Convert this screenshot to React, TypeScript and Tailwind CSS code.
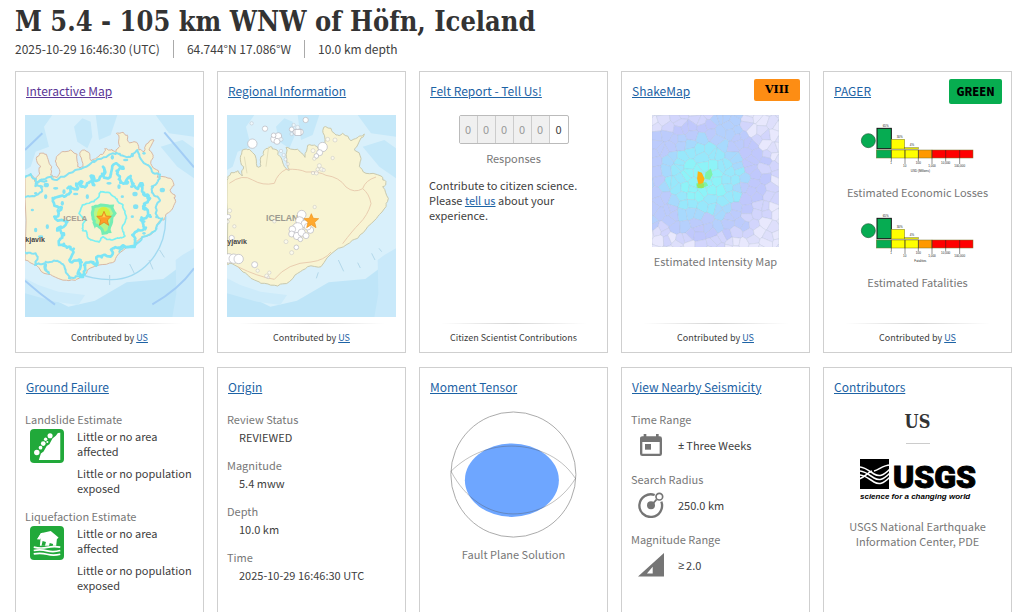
import type { ReactNode } from "react";

type Point = [number, number];

function createRandom(seed: number) {
  let state = seed;
  return () => {
    state = (state * 16807) % 2147483647;
    return state / 2147483647;
  };
}

function parsePoints(source: string): Point[] {
  return source.split(" ").map((pair) => {
    const [x, y] = pair.split(",").map(Number);
    return [x, y];
  });
}

/** Adds natural looking irregularity to an outline by displacing midpoints. */
function roughen(source: string, amount: number, depth: number, closed = true) {
  const random = createRandom(4231);
  let points = parsePoints(source);
  let scale = amount;
  for (let level = 0; level < depth; level += 1) {
    const next: Point[] = [];
    points.forEach(([x, y], i) => {
      next.push([x, y]);
      if (!closed && i === points.length - 1) return;
      const [nx, ny] = points[(i + 1) % points.length];
      next.push([
        (x + nx) / 2 + (random() - 0.5) * scale,
        (y + ny) / 2 + (random() - 0.5) * scale,
      ]);
    });
    points = next;
    scale *= 0.55;
  }
  return points.map(([x, y]) => `${x.toFixed(1)},${y.toFixed(1)}`).join(" ");
}

/** Voronoi cells for jittered grid seeds, cut from a bounding box. */
function voronoi(width: number, height: number, columns: number, rows: number) {
  const random = createRandom(9173);
  const seeds: Point[] = [];
  for (let r = -1; r <= rows; r += 1) {
    for (let c = -1; c <= columns; c += 1) {
      seeds.push([
        ((c + 0.5 + (random() - 0.5) * 0.95) * width) / columns,
        ((r + 0.5 + (random() - 0.5) * 0.95) * height) / rows,
      ]);
    }
  }
  const reach = (width / columns) * 4;
  return seeds.map((seed) => {
    let cell: Point[] = [[0, 0], [width, 0], [width, height], [0, height]];
    for (const other of seeds) {
      const dx = other[0] - seed[0];
      const dy = other[1] - seed[1];
      if (other === seed || Math.hypot(dx, dy) > reach) continue;
      const mx = (other[0] + seed[0]) / 2;
      const my = (other[1] + seed[1]) / 2;
      const side = (p: Point) => (p[0] - mx) * dx + (p[1] - my) * dy;
      const clipped: Point[] = [];
      cell.forEach((a, i) => {
        const b = cell[(i + 1) % cell.length];
        const sa = side(a);
        const sb = side(b);
        if (sa <= 0) clipped.push(a);
        if (sa < 0 !== sb < 0) {
          const t = sa / (sa - sb);
          clipped.push([a[0] + (b[0] - a[0]) * t, a[1] + (b[1] - a[1]) * t]);
        }
      });
      cell = clipped;
    }
    return { seed, cell };
  });
}

const INTERACTIVE_COAST = roughen(
  "28,325 45,312 58,335 72,312 76,290 62,265 72,250 92,253 108,290 105,315 124,322 132,308 122,285 122,262 138,246 165,240 184,252 186,290 202,292 192,255 200,240 218,246 226,272 245,262 264,250 268,235 285,240 300,247 310,232 310,205 302,190 322,187 335,195 338,215 355,215 370,240 385,245 392,222 415,210 400,240 412,260 405,280 428,302 425,322 465,325 475,345 463,360 478,375 480,395 468,420 450,435 445,450 430,455 420,480 385,500 360,525 310,550 290,578 250,585 215,600 190,625 160,632 120,622 85,610 60,585 28,570",
  9,
  2,
);

const REGIONAL_COAST = roughen(
  "28,332 40,308 60,302 74,318 78,290 68,262 74,240 95,238 112,255 118,290 130,288 130,260 138,243 158,230 178,240 190,262 200,290 216,300 206,262 205,232 240,238 262,262 270,226 290,225 308,240 322,208 318,172 340,175 355,195 375,190 400,212 425,198 440,192 420,225 410,240 430,265 425,290 445,310 490,318 505,335 495,350 512,385 505,410 480,440 450,470 420,505 385,525 355,540 310,590 270,590 240,610 215,635 180,648 140,640 100,625 70,600 40,580 28,582",
  9,
  2,
);

const OUTER_CONTOUR = roughen(
  "112,385 150,378 158,352 185,358 200,335 208,352 225,318 232,345 250,330 262,290 278,325 300,280 318,292 312,325 335,340 345,318 358,350 380,340 385,375 403,385 388,405 405,440 375,450 388,478 350,495 352,530 310,535 285,560 248,558 240,585 205,585 200,618 190,600 195,570 165,565 160,530 130,525 145,495 125,475 155,455 116,440 138,412",
  24,
  3,
);

const MIDDLE_CONTOUR = roughen(
  "200,405 235,395 255,365 280,368 305,388 322,405 332,440 320,470 328,498 290,510 262,500 250,515 225,510 212,485 200,475 210,450 190,430",
  10,
  3,
);

const INNER_CONTOUR = roughen(
  "232,412 255,405 290,408 298,430 288,455 282,485 262,490 252,472 238,465 232,440",
  8,
  2,
);

const STAR =
  "0,-22 6,-8 22,-7 10,4 14,20 0,11 -14,20 -10,4 -22,-7 -6,-8";

function Sea() {
  return (
    <>
      <rect x="28" y="135" width="507" height="606" fill="#d9f0fb" />
      <path d="M28 135H110L85 170 100 230 60 245 45 290 28 300ZM175 170l25-25 25 10 5 45-15 35-30-20ZM240 135h65l-20 60-35 15ZM370 135h50l40 55 75 10V135ZM435 230l65-20 35 25v90l-50-35ZM535 135h-90l90 40Z" fill="#c5e8f9" />
      <path d="M28 665l70 15 60 30 80-18 95-55 110-10 60-45 32 8v151H28Z" fill="#bfe5f8" />
      <path d="M28 625l40 20 60 20 80 10-20 30-70-10-90-25Z" fill="#cdebfa" />
      <path d="M480 570l20-15 35-20v206h-65l12-70Z" fill="#c9e9fa" />
    </>
  );
}

function InteractiveMapPicture() {
  const flecks: Point[] = [
    [280, 340], [310, 350], [348, 350], [358, 372], [320, 380], [145, 365], [180, 372],
    [215, 380], [350, 440], [360, 410], [385, 250], [290, 262], [330, 270], [350, 255],
    [235, 275], [92, 345], [60, 370], [90, 380], [120, 355], [140, 400], [385, 490],
    [440, 360], [410, 350], [60, 480], [75, 500], [95, 470], [50, 420],
  ];
  return (
    <svg viewBox="28 135 507 606" className="block w-full" role="img" aria-label="Shaking contours over Iceland">
      <Sea />
      <polygon points={INTERACTIVE_COAST} fill="#f7f2d2" stroke="#d8b9a6" strokeWidth="3" />
      <path d="M450 440C452 550 375 630 285 629 240 628 215 622 190 610" fill="none" stroke="#a2daf1" strokeWidth="4" />
      <path d="M28 240L80 190M446 187l89 105M28 632q45 40 90 72M410 703q80-45 125-108" fill="none" stroke="#a3cdf5" strokeWidth="6" />
      <path d="M282 615v30M342 582l14 28M400 570l12 28M432 540l14 22" stroke="#b3d8ea" strokeWidth="3" />
      <g fill="none" stroke="#84e2f3" strokeLinejoin="round">
        <polyline points={roughen("28,325 45,312 60,340 105,320 124,330 190,298 245,268 300,252 335,262 365,240 395,285 425,310 425,335", 16, 3, false)} strokeWidth="6" />
        <polyline points={roughen("28,380 62,375 80,350 60,345 95,332", 18, 3, false)} strokeWidth="6" />
        <polyline points={roughen("28,545 60,550 58,585 85,580 100,610 90,575 125,572 150,600 160,625 190,620", 14, 3, false)} strokeWidth="6" />
        <polyline points={roughen("425,335 412,370 430,395 425,440 440,445 420,480 385,500 360,525 310,548", 16, 3, false)} strokeWidth="6" />
        <polygon points={OUTER_CONTOUR} strokeWidth="8" stroke="#7ce5f6" />
        <polygon points={MIDDLE_CONTOUR} strokeWidth="5" stroke="#7cf0f2" />
      </g>
      <g fill="#84e2f3">
        {flecks.map(([x, y], i) => (
          <ellipse key={i} cx={x} cy={y} rx={i % 3 ? 5 : 8} ry={i % 2 ? 7 : 4} />
        ))}
      </g>
      <polygon points={INNER_CONTOUR} fill="#b6f58a" stroke="#74edb4" strokeWidth="9" />
      <ellipse cx="264" cy="435" rx="20" ry="24" fill="#d7ee3c" />
      <g fontFamily="'Liberation Sans', sans-serif" fontWeight="700">
        <text x="143" y="452" fontSize="24" fill="#a79d93">ICELA</text>
        <text x="29" y="517" fontSize="21" fill="#444">kjavik</text>
      </g>
      <polygon points={STAR} transform="translate(265 446)" fill="#ff9c28" stroke="#e07c18" strokeWidth="2" />
      <path d="M251 442l10-2 4-11 4 11 10 2Z" fill="#ffd34a" />
    </svg>
  );
}

function RegionalMapPicture() {
  const quakes: [number, number, number][] = [
    [104, 221, 14], [315, 231, 14], [142, 176, 8], [264, 150, 8], [102, 160, 5],
    [170, 207, 11], [182, 198, 10], [178, 214, 9], [168, 196, 7], [190, 208, 6],
    [222, 178, 7], [234, 186, 8], [248, 186, 9], [240, 172, 6], [228, 165, 5],
    [222, 192, 5], [190, 243, 5], [198, 255, 5], [204, 268, 5], [210, 282, 5],
    [306, 248, 9], [296, 258, 7], [290, 266, 5], [330, 208, 6], [352, 210, 6],
    [345, 264, 5], [305, 287, 6], [312, 298, 6], [296, 309, 6], [286, 309, 5],
    [300, 298, 5], [318, 300, 5], [291, 411, 5], [286, 242, 6],
    [252, 434, 13], [246, 452, 12], [262, 462, 12], [240, 474, 16], [224, 478, 10],
    [222, 492, 9], [238, 498, 11], [252, 488, 11], [265, 497, 9], [278, 480, 10],
    [248, 508, 7], [270, 470, 10], [205, 515, 6], [236, 532, 7], [222, 548, 6],
    [33, 565, 14], [48, 566, 14], [63, 567, 14], [111, 584, 9], [120, 602, 5],
    [147, 618, 6], [155, 608, 5], [152, 622, 4], [32, 440, 7], [36, 422, 6],
    [50, 469, 5], [42, 504, 8], [170, 454, 5], [30, 455, 5],
  ];
  return (
    <svg viewBox="28 135 507 606" className="block w-full" role="img" aria-label="Recent earthquakes around Iceland">
      <Sea />
      <polygon points={REGIONAL_COAST} fill="#f8f4d3" stroke="#c9c9ae" strokeWidth="3" />
      <g fill="none" stroke="#e9cdb0" strokeWidth="3">
        <path d="M35 340q40-30 70-10 30 18 65 10 10-30 35-42 40-2 60 8 40-2 60 10 40 5 60 35 25 20 50 5 8-25 40-35M435 356q20 15 25 45-10 35-35 60-20 20-50 60M60 590q60 30 110 38 40-50 110-52 40-5 60-30" />
        <path d="M145 290l8-60M88 310l-8-50" stroke="#e4dfbd" />
      </g>
      <path d="M296 625l6-18M362 570l16 34M420 578l8 16M462 550l10 20M484 535l8 10" stroke="#b3d8ea" strokeWidth="3" />
      <text x="145" y="452" fontSize="26" fill="#9b9a90" fontFamily="'Liberation Sans', sans-serif" fontWeight="700">ICELAND</text>
      <g fill="#fff" stroke="#b5b5bd" strokeWidth="2">
        {quakes.map(([x, y, r], i) => (
          <circle key={i} cx={x} cy={y} r={r} fillOpacity={r < 7 ? 0.55 : 1} strokeOpacity={r < 7 ? 0.6 : 1} />
        ))}
        <rect x="232" y="178" width="18" height="18" />
      </g>
      <text x="29" y="523" fontSize="21" fill="#444" fontFamily="'Liberation Sans', sans-serif" fontWeight="700">yjavik</text>
      <polygon points={STAR} transform="translate(281 453)" fill="#ffa92e" stroke="#ef9420" strokeWidth="2" />
    </svg>
  );
}

const SHAKE_CELLS = voronoi(379, 396, 14, 15);

function shakeColor([x, y]: Point, index: number) {
  const dx = x - 148;
  const dy = y - 192;
  const distance = Math.hypot(dx * (dx > 0 ? 0.9 : 1), dy) + ((index * 37) % 24) - 12;
  if (distance < 60) return "#8df3f8";
  if (distance < 100) return "#97e8fb";
  if (distance < 122) return "#a7d9fd";
  if (y < 60 && x > 180 && x < 260) return "#b3d0fd";
  if (x < 280 && y > 50 && y < 340) return index % 4 ? "#bccbfc" : "#b5d0fd";
  if (distance < 175) return "#c0c8fc";
  if (distance < 205) return "#d2d5fc";
  return index % 3 ? "#e8e8fd" : "#dedffb";
}

function ShakeMapPicture() {
  return (
    <svg viewBox="0 0 379 396" className="mx-auto block w-3/4" role="img" aria-label="Intensity map">
      <g stroke="#a9b4cc" strokeOpacity="0.35" strokeWidth="2">
        {SHAKE_CELLS.map(({ seed, cell }, i) => (
          <polygon key={i} points={cell.map((p) => p.join(",")).join(" ")} fill={shakeColor(seed, i)} />
        ))}
      </g>
      <path d="M160 172l16-12 5 18-8 16-16-4ZM132 205l12-4 18 0 6 10-20 9-14-2Z" fill="#7df3a9" />
      <path d="M134 210l8-10 14 6-2 12-16 0Z" fill="#9be65a" />
      <path d="M137 168l12 5 8 18-4 12-14 4-4-16Z" fill="#fcb316" />
    </svg>
  );
}

function PagerChart({ unit, label }: { unit: string; label: string }) {
  return (
    <svg viewBox="28 135 507 207" className="block w-full" role="img" aria-label={label}>
      <circle cx="134" cy="212" r="21" fill="#06ac52" stroke="#1c5a36" strokeWidth="2" />
      <rect x="160" y="175" width="43" height="61" fill="#06ac52" stroke="#111" strokeWidth="3" />
      <g strokeWidth="1.5" stroke="#77752a">
        <rect x="203" y="208" width="40" height="29" fill="#ff0" />
        <rect x="243" y="233" width="41" height="4" fill="#ff0" />
        <path d="M158 238.500H284" stroke="#999" />
        <rect x="158" y="240" width="45" height="24" fill="#06ac52" />
        <rect x="203" y="240" width="41" height="24" fill="#ff0" />
        <rect x="244" y="240" width="40" height="24" fill="#ff0" />
        <rect x="284" y="240" width="41" height="24" fill="#ff9900" />
        <rect x="325" y="240" width="123" height="24" fill="#f00" />
      </g>
      <path d="M203 240v34M244 240v42M284 240v34M325 240v42M366 240v34M408 240v42" stroke="#222" strokeWidth="1.500" />
      <g fontFamily="'Liberation Sans', sans-serif" fontSize="9" fill="#222" textAnchor="middle">
        <text x="186" y="171">65%</text>
        <text x="228" y="205">30%</text>
        <text x="265" y="229">4%</text>
        <text x="202" y="283">1</text>
        <text x="243" y="292">10</text>
        <text x="284" y="283">100</text>
        <text x="325" y="292">1,000</text>
        <text x="366" y="283">10,000</text>
        <text x="408" y="292">100,000</text>
        <text x="290" y="306">{unit}</text>
      </g>
    </svg>
  );
}

function LandslideIcon() {
  return (
    <svg viewBox="0 0 100 100" className="size-[34px] shrink-0" aria-hidden="true">
      <rect width="100" height="100" rx="12" fill="#21a93a" />
      <path d="M26 91L32 72 40 66 49 50 57 45 66 28 76 20 82 12 89 11V91Z" fill="#fff" />
      <g fill="#fff">
        <circle cx="20" cy="69" r="8" />
        <circle cx="31" cy="55" r="5.500" />
        <circle cx="39" cy="43" r="7" />
        <circle cx="46" cy="30" r="5" />
        <circle cx="59" cy="20" r="7.500" />
        <circle cx="51" cy="38" r="3" />
      </g>
    </svg>
  );
}

function LiquefactionIcon() {
  return (
    <svg viewBox="0 0 100 100" className="size-[34px] shrink-0" aria-hidden="true">
      <rect width="100" height="100" rx="12" fill="#21a93a" />
      <path d="M21 39L32 21 61 15 84 34 79 39 77 58H29L31 37Z" fill="#fff" />
      <path d="M21 39L32 21 38 20 29 40Z" fill="#fff" />
      <path d="M37 44l10 3-3 11H34ZM58 50l10 3-2 10H55Z" fill="#21a93a" />
      <g fill="none" stroke="#fff" strokeWidth="5">
        <path d="M11 62q20 5 39 1t39-1" />
        <path d="M11 72q20-4 39 1t39-1" />
        <path d="M11 82q20-4 39 1t39 0" />
      </g>
    </svg>
  );
}

function CalendarIcon() {
  return (
    <svg viewBox="0 0 66 66" className="size-[22px] shrink-0" fill="#757575" aria-hidden="true">
      <path d="M8 7h3V0h8v7h29V0h8v7h3q7 0 7 7v45q0 7-7 7H7q-7 0-7-7V14q0-7 8-7ZM7 24v35h52V24Z" fillRule="evenodd" />
      <rect x="15" y="30" width="18" height="17" />
    </svg>
  );
}

function RadiusIcon() {
  return (
    <svg viewBox="0 0 78 78" className="size-[26px] shrink-0" aria-hidden="true">
      <g fill="none" stroke="#757575">
        <path d="M50 9A34 34 0 1 0 70 29" strokeWidth="7" />
        <circle cx="64" cy="14" r="10" strokeWidth="5" />
      </g>
      <circle cx="39" cy="40" r="12" fill="#757575" />
      <path d="M40 40L56 22" stroke="#757575" strokeWidth="5" />
    </svg>
  );
}

function MagnitudeIcon() {
  return (
    <svg viewBox="0 0 76 70" className="w-[26px] shrink-0" aria-hidden="true">
      <path d="M0 69L76 0V69ZM26 60H43V40Z" fill="#757575" fillRule="evenodd" />
    </svg>
  );
}

function MomentTensorPicture() {
  return (
    <svg viewBox="89 136 383 384" className="mx-auto block w-3/4" role="img" aria-label="Focal mechanism">
      <ellipse cx="276" cy="345" rx="142" ry="111" fill="#6ea6ff" />
      <g fill="none" strokeWidth="2.500">
        <circle cx="280.500" cy="328" r="189" stroke="#999" />
        <path d="M92 318C150 262 215 242 275 242S420 265 468 340" stroke="#555" strokeOpacity="0.45" />
        <path d="M92 318C135 400 205 447 280 447S425 410 468 340" stroke="#555" strokeOpacity="0.45" />
      </g>
    </svg>
  );
}

function UsgsLogo() {
  return (
    <svg viewBox="0 0 116 44" className="mx-auto block w-[116px]" role="img" aria-label="USGS">
      <rect width="29" height="30" />
      <g fill="none" stroke="#fff" strokeWidth="1.600">
        <path d="M-1 8C5 8 9 12 14 15s9 2 16-5" />
        <path d="M-1 12C5 12 9 16 14 19s9 2 16-5" />
        <path d="M-1 16C5 16 9 20 14 23s9 2 16-5" />
        <path d="M-1 20C4 19 7 14 12 12" />
        <path d="M14 12C19 11 23 6 30 6" />
      </g>
      <text x="33" y="29" fontSize="32" fontWeight="900" stroke="#000" strokeWidth="1" fontFamily="'Liberation Sans Narrow', Roboto, 'Liberation Sans', sans-serif">USGS</text>
      <text x="0" y="40" fontSize="8" fontWeight="700" fontStyle="italic" fontFamily="'Liberation Sans', sans-serif">science for a changing world</text>
    </svg>
  );
}

const LINK = "text-[#1d63a5] underline";

function Footer({ children }: { children: ReactNode }) {
  return (
    <footer className="mt-auto pt-1.5 text-center text-[9px]">
      <div className="mx-3 h-px bg-linear-to-r from-transparent via-[#d4d4d4] to-transparent" />
      <p className="leading-7">{children}</p>
    </footer>
  );
}

function ContributedBy() {
  return (
    <Footer>
      Contributed by <a href="#us" className={LINK}>US</a>
    </Footer>
  );
}

interface CardProps {
  title: string;
  visited?: boolean;
  badge?: ReactNode;
  children: ReactNode;
}

function Card({ title, visited, badge, children }: CardProps) {
  return (
    <section className="flex min-w-0 flex-col border border-[#cfcfcf] px-[9px]">
      <header className="flex h-[43px] items-start justify-between pt-[7px]">
        <h2 className="pl-px text-xs leading-6">
          <a href="#details" className={visited ? "text-[#5a3596] underline" : LINK}>{title}</a>
        </h2>
        {badge}
      </header>
      {children}
    </section>
  );
}

function Caption({ children }: { children: ReactNode }) {
  return <p className="text-center text-[11px] leading-4 text-[#777]">{children}</p>;
}

function Hazard({ label, icon }: { label: string; icon: ReactNode }) {
  return (
    <div className="mb-3">
      <h3 className="mb-0.5 text-[11px] leading-4 text-[#777]">{label}</h3>
      <div className="flex gap-[13px] pl-[5px]">
        {icon}
        <div className="flex flex-col gap-[7px] text-[11px] leading-[15px]">
          <p>Little or no area affected</p>
          <p>Little or no population exposed</p>
        </div>
      </div>
    </div>
  );
}

interface SearchTermProps {
  label: string;
  icon: ReactNode;
  sign?: string;
  value: string;
}

function SearchTerm({ label, icon, sign, value }: SearchTermProps) {
  return (
    <div className="mb-1">
      <dt className="text-[11px] leading-4 text-[#777]">{label}</dt>
      <dd className="flex h-10 items-center pb-1 text-[11px]">
        <span className="flex w-[47px] justify-center pr-[7px]">{icon}</span>
        {sign && <span className="mr-0.5 font-['Noto_Sans',sans-serif]">{sign}</span>}
        {value}
      </dd>
    </div>
  );
}

const ORIGIN = [
  ["Review Status", "REVIEWED"],
  ["Magnitude", "5.4 mww"],
  ["Depth", "10.0 km"],
  ["Time", "2025-10-29 16:46:30 UTC"],
];

const DIGITS = [0, 0, 0, 0, 0, 0];

export default function App() {
  return (
    <main className="bg-white pr-3 pb-4 pl-[15px] font-['Noto_Sans_CJK_SC',sans-serif] text-[#404040]">
      <header className="pt-1">
        <h1 className="font-['DejaVu_Serif_Condensed','DejaVu_Serif',serif] text-[27px] leading-9 font-bold text-[#333]">
          M 5.4 - 105 km WNW of Höfn, Iceland
        </h1>
        <ul className="mb-[13px] flex divide-x divide-[#aaa] text-xs leading-[18px]">
          <li className="pr-[13px]">2025-10-29 16:46:30 (UTC)</li>
          <li className="px-[13px]">64.744°N 17.086°W</li>
          <li className="pl-[13px]">10.0 km depth</li>
        </ul>
      </header>

      <div className="grid auto-rows-fr grid-cols-2 gap-x-[13px] gap-y-3.5 sm:grid-cols-3 lg:grid-cols-5">
        <Card title="Interactive Map" visited>
          <InteractiveMapPicture />
          <ContributedBy />
        </Card>

        <Card title="Regional Information">
          <RegionalMapPicture />
          <ContributedBy />
        </Card>

        <Card title="Felt Report - Tell Us!">
          <div className="mb-1.5 flex justify-center">
            <div className="flex divide-x divide-[#ccc] rounded-xs border border-[#bbb] text-[11px]">
              {DIGITS.map((digit, i) => (
                <span
                  key={i}
                  className={i < 5 ? "w-[18px] bg-[#f0f0f0] text-center leading-[27px] text-[#999]" : "w-[18px] text-center leading-[27px]"}
                >
                  {digit}
                </span>
              ))}
            </div>
          </div>
          <Caption>Responses</Caption>
          <p className="mt-3 text-[11px] leading-[15px]">
            Contribute to citizen science. Please <a href="#tell-us" className={LINK}>tell us</a> about your experience.
          </p>
          <Footer>Citizen Scientist Contributions</Footer>
        </Card>

        <Card
          title="ShakeMap"
          badge={
            <span className="w-[46px] rounded-xs bg-[#fd8d14] text-center font-['DejaVu_Serif',serif] text-[11px] leading-[22px] font-bold text-black">
              VIII
            </span>
          }
        >
          <ShakeMapPicture />
          <div className="mt-1.5"><Caption>Estimated Intensity Map</Caption></div>
          <ContributedBy />
        </Card>

        <Card
          title="PAGER"
          badge={
            <span className="w-[53px] rounded-xs bg-[#07ad50] text-center text-[11px] leading-[25px] font-black text-black">
              GREEN
            </span>
          }
        >
          <PagerChart unit="USD (Millions)" label="Economic losses chart" />
          <Caption>Estimated Economic Losses</Caption>
          <div className="mt-[5px]">
            <PagerChart unit="Fatalities" label="Fatalities chart" />
          </div>
          <Caption>Estimated Fatalities</Caption>
          <ContributedBy />
        </Card>

        <Card title="Ground Failure">
          <Hazard label="Landslide Estimate" icon={<LandslideIcon />} />
          <Hazard label="Liquefaction Estimate" icon={<LiquefactionIcon />} />
        </Card>

        <Card title="Origin">
          <dl className="flex flex-col gap-3 text-[11px] leading-4">
            {ORIGIN.map(([label, value]) => (
              <div key={label}>
                <dt className="mb-0.5 text-[#777]">{label}</dt>
                <dd className="pl-3">{value}</dd>
              </div>
            ))}
          </dl>
        </Card>

        <Card title="Moment Tensor">
          <MomentTensorPicture />
          <div className="mt-2"><Caption>Fault Plane Solution</Caption></div>
        </Card>

        <Card title="View Nearby Seismicity">
          <dl>
            <SearchTerm label="Time Range" icon={<CalendarIcon />} sign="±" value="Three Weeks" />
            <SearchTerm label="Search Radius" icon={<RadiusIcon />} value="250.0 km" />
            <SearchTerm label="Magnitude Range" icon={<MagnitudeIcon />} sign="≥" value="2.0" />
          </dl>
        </Card>

        <Card title="Contributors">
          <h3 className="text-center font-['DejaVu_Serif_Condensed','DejaVu_Serif',serif] text-lg leading-[22px] font-bold text-[#333]">US</h3>
          <hr className="mx-auto mt-2.5 mb-[15px] w-6 border-[#ccc]" />
          <UsgsLogo />
          <p className="mt-4 px-4 text-center text-[11px] leading-[15px] text-[#777]">
            USGS National Earthquake Information Center, PDE
          </p>
        </Card>
      </div>
    </main>
  );
}
